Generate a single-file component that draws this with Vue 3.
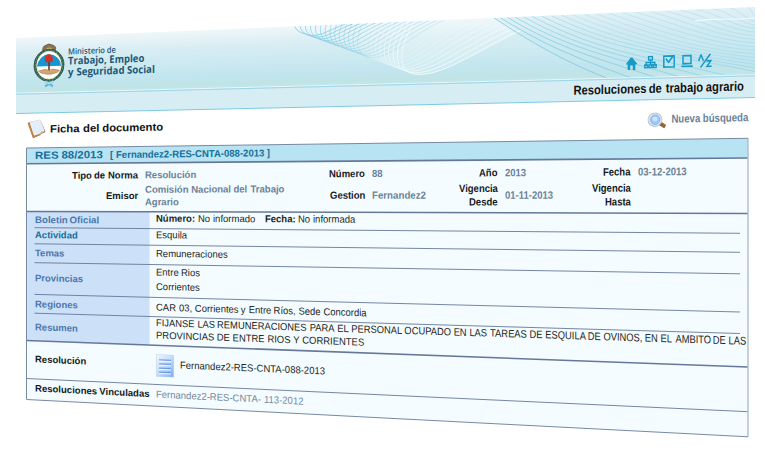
<script setup>
import { h, ref, onMounted } from 'vue'

// The page is laid out flat, then every word and icon is moved onto a slanted
// sheet whose height grows from left to right.
const LEFT = 26
const SPAN = 722
const lift = (v) => -10 + (v - 148) * 0.1877
const mapY = (x, v) => v + ((x - LEFT) / SPAN) * lift(v)

// A run of text, split in words; `fit` is the drawn width of the run.
const T = (props) =>
  h('span', { class: 'run', 'data-fit': props.fit, 'data-side': props.side },
    props.t.split(' ').flatMap((w, i) => [i ? ' ' : '', h('span', { class: 'w' }, w)]))
T.props = ['t', 'fit', 'side']

const page = ref(null)
onMounted(() => {
  const jobs = []
  page.value.querySelectorAll('.w').forEach((el) => {
    const r = el.getBoundingClientRect()
    const run = el.closest('.run')
    let k = 1
    let x = r.left
    if (run && run.dataset.fit) {
      const rr = run.getBoundingClientRect()
      k = Number(run.dataset.fit) / rr.width
      x = run.dataset.side === 'right'
        ? rr.right - (rr.right - r.left) * k
        : rr.left + (r.left - rr.left) * k
    }
    const mid = r.top + r.height / 2
    const s = 1 + ((x + (r.width * k) / 2 - LEFT) / SPAN) * 0.1877
    const slope = lift(mid) / SPAN
    const dy = mapY(x, mid) - mid - (s - 1) * (r.height / 2)
    jobs.push([el, `matrix(${k},${slope * k},0,${s},${x - r.left},${dy})`])
  })
  jobs.forEach(([el, m]) => { el.style.transform = m })
})

// Sheet art
const topY = (x) => 38 - ((x - 16) / 739) * 31
const midY = (x) => 94 - ((x - 16) / 739) * 18.5
const stops = [[0, 238, 246, 249], [0.28, 216, 237, 243], [0.5, 206, 234, 241], [0.76, 194, 229, 239], [0.9, 192, 228, 230], [1, 194, 230, 234]]
const shade = (p) => {
  let i = 0
  while (i < stops.length - 2 && p > stops[i + 1][0]) i++
  const [a, b] = [stops[i], stops[i + 1]]
  const f = (p - a[0]) / (b[0] - a[0])
  return `rgb(${[1, 2, 3].map((c) => Math.round(a[c] + (b[c] - a[c]) * f)).join(',')})`
}
const bands = Array.from({ length: 40 }, (_, i) => {
  const p = i / 40
  const yl = 38 + 56 * p
  const yr = 7 + 68.5 * p
  return { pts: `16,${yl} 755,${yr} 755,75.5 16,94`, fill: shade(p) }
})
const swirl = Array.from({ length: 24 }, (_, i) => {
  const f = i / 23
  const sx = 295 + 119 * f
  const sy = topY(sx)
  const ax = 305 + 99 * f
  const ay = 34 + 34.5 * f
  const bx = ax + 7 + 8 * f
  const by = ay + 1.5 + 4.5 * f
  const ex = 345 + 176 * f
  const ey = topY(ex) + Math.max(0, f - 0.7) * 45
  return {
    d: `M${sx},${sy} C${sx + 1 - 10 * f},${sy + 4 + 14 * f} ${ax - 6},${ay - 2 - 14 * f} ${ax},${ay}` +
      ` Q${ax + 3 + 3 * f},${by} ${bx},${by} C${bx + 10 + 18 * f},${by} ${ex - 16 - 28 * f},${ey + 6 + 13 * f} ${ex},${ey}`,
    stroke: f < 0.6 ? '#7cc9e2' : '#f8fdfe',
    o: f < 0.6 ? 0.85 - f * 0.95 : 0.1 + (f - 0.6) * 2
  }
})
const fan = Array.from({ length: 22 }, (_, i) => {
  const sx = 494 + i * 6.2 + i * i * 0.28
  const sy = topY(sx)
  const low = i < 6
  const ex = low ? 609 + i * 24 : 757
  const ey = low ? midY(ex) : 72 - (i - 6) * 3.6
  const s0 = 0.66 - i * 0.026
  const s1 = Math.max(0.06, 0.4 - i * 0.03)
  const reach = (ex - sx) * 0.36
  return { d: `M${sx},${sy} C${sx + reach},${sy + reach * s0} ${ex - reach},${ey - reach * s1} ${ex},${ey}`, o: Math.max(0.25, 0.8 - i * 0.06) }
})
const rules = [
  [26.5, 163.7, 748, 158, 1.6], [26.5, 211.4, 748, 213.6, 1.5],
  [34.5, 227.7, 740, 233.3, 0.9], [34.5, 243.8, 740, 252.3, 0.9],
  [34.5, 262.7, 740, 273.8, 0.9], [34.5, 294.4, 740, 312, 0.9],
  [34.5, 313.2, 740, 333.5, 0.9], [26.5, 340.5, 748, 367, 1.6],
  [26.5, 378.5, 748, 411.7, 0.9]
]
</script>

<template>
  <div class="page" ref="page">
    <svg class="sheet" width="765" height="457" viewBox="0 0 765 457">
      <defs>
        <clipPath id="banner"><polygon points="16,38 755,7 755,75.5 16,94" /></clipPath>
      </defs>
      <polygon v-for="(b, i) in bands" :key="i" :points="b.pts" :fill="b.fill" />
      <g clip-path="url(#banner)" fill="none">
        <path d="M494,18 C530,42 570,62 609,79 L755,80 L755,5Z" fill="#bfe6f0" opacity=".3" />
        <path d="M294,26 C306,38 400,66 418,74 C440,76 480,52 521,31 L494,18Z" fill="#f2fafc" opacity=".28" />
        <path v-for="(s, i) in swirl" :key="'s' + i" :d="s.d" :stroke="s.stroke" :stroke-opacity="s.o" stroke-width=".9" />
        <path v-for="(s, i) in fan" :key="'f' + i" :d="s.d" stroke="#7cc9e2" :stroke-opacity="s.o" stroke-width="1" />
        <path d="M695,21 C715,18 735,20 756,18" stroke="#f4fbfd" stroke-width="1" />
      </g>
      <polygon points="16,94 755,75.5 755,97.5 16,113.5" fill="#d7edf4" />
      <path d="M16,93.2 L755,74.7" stroke="#e9f7fb" stroke-width="1" />
      <path d="M16,94.3 L755,75.8" stroke="#9bd5e9" stroke-width="1" />
      <path d="M16,113.5 L755,97.5" stroke="#7ccbe4" stroke-width="1" />
      <polygon points="26.5,148 748,138.3 748,436.8 26.5,399.5" fill="#f4fcff" />
      <polygon points="26.5,148 748,138.3 748,158 26.5,163.7" fill="#b8e3f2" />
      <polygon points="27,211.4 149.5,211.8 149.5,344.9 27,340.5" fill="#cce0f8" />
      <path v-for="(r, i) in rules" :key="'r' + i" :d="`M${r[0]},${r[1]} L${r[2]},${r[3]}`" stroke="#65789a" :stroke-width="r[4]" />
      <path d="M748,138.3 L748,436.8" stroke="#aebdd0" stroke-width="1.4" />
      <path d="M26.5,148 L748,138.3 M26.5,399.5 L748,436.8 M26.5,148 L26.5,399.5" stroke="#7889a5" stroke-width="1" fill="none" />
    </svg>

    <header class="banner">
      <div class="brand">
        <svg class="w crest" width="32" height="44" viewBox="0 0 32 44">
          <path d="M10 8 Q9 3 13 2 L16 1 L19 2 Q24 3 22 8Z" fill="#8d7452" stroke="#5e503a" stroke-width=".8" />
          <path d="M12 7 Q16 2 20 7" fill="#dfba67" />
          <ellipse cx="16" cy="22" rx="15" ry="16" fill="#2b6150" stroke="#385044" stroke-width=".8" />
          <ellipse cx="16" cy="22" rx="13.8" ry="15" fill="none" stroke="#5c9272" stroke-width="1" stroke-dasharray="1.5 1.5" />
          <ellipse cx="16" cy="22" rx="12.3" ry="13.8" fill="#fff" stroke="#f2e4bc" stroke-width=".8" />
          <path d="M3.9 23 A12.2 13.7 0 0 1 28.1 23Z" fill="#1598d1" />
          <path d="M16 17 V30" stroke="#68382a" stroke-width="1.6" />
          <path d="M12 18 Q11 12 15 11 Q20 11 20 17 L19 19 L13 19Z" fill="#d62f25" />
          <path d="M5.5 27.5 L12 26 L16 27 L20 26 L26.5 27.5 L24 29.5 L18 31 L14 31 L8 29.5Z" fill="#d5a56e" stroke="#94704b" stroke-width=".5" />
          <path d="M12 38 L20 43 M20 38 L12 43" stroke="#66b9e0" stroke-width="2.2" />
          <path d="M12 38 Q16 42 20 38" fill="none" stroke="#c7e9f6" stroke-width="1.2" />
        </svg>
        <div class="brand-text">
          <T class="small" t="Ministerio de" fit="48" />
          <T t="Trabajo, Empleo" fit="76" />
          <T t="y Seguridad Social" fit="86.5" />
        </div>
      </div>
      <nav class="tools">
        <svg class="w home" width="11" height="11" viewBox="0 0 12 11" preserveAspectRatio="none"><path d="M0 5.5 L4.6 .8 V0 H7.4 V.8 L12 5.5 V6 H10.2 V11 H7.4 V7 H4.6 V11 H1.8 V6 H0Z" fill="#169bc9" /></svg>
        <svg class="w" width="13" height="11" viewBox="0 0 13 11" fill="none" stroke="#169bc9" stroke-width="1.4"><path d="M4.6 .7h3.8v3H4.6z M6.5 3.7V8 M2.2 8V5.8h8.6V8 M.8 8h2.8v2.3H.8z M5.1 8h2.8v2.3H5.1z M9.4 8h2.8v2.3H9.4z" /></svg>
        <svg class="w" width="12" height="11" viewBox="0 0 12 11" fill="none" stroke="#169bc9" stroke-width="1.5"><path d="M.8 .8h10.4v9.4H.8z M2.8 3 L5.6 6 L10 1" /></svg>
        <svg class="w" width="12" height="11" viewBox="0 0 12 11" fill="none" stroke="#169bc9" stroke-width="1.5"><path d="M2 .8h8v7H2z M.3 10.2h11.4" /></svg>
        <svg class="w az" width="14" height="12" viewBox="0 0 14 12" fill="none" stroke="#169bc9" stroke-width="1.4"><path d="M.5 6 L3 .8 L5.5 6 M2.5 11.5 L12.5 0 M8.6 6h4.3l-4 4.8h4.7" /></svg>
      </nav>
    </header>
    <div class="section"><T t="Resoluciones de trabajo agrario" fit="171" side="right" /></div>

    <div class="heading">
      <svg class="w note" width="19" height="20" viewBox="0 0 19 20">
        <path d="M1.5 4 L13 1.5 L18 13 L6.5 18.5Z" fill="#c58a46" stroke="#885b2c" stroke-width=".8" />
        <path d="M3 3.6 L13 1.2 L17.2 12.2 L13 15 L7.2 16.4Z" fill="#e4eefb" stroke="#f8fbff" stroke-width=".7" />
        <path d="M1.4 4 L6.4 18.4 L13.5 15.5" fill="none" stroke="#c08345" stroke-width="1.6" />
        <path d="M12.5 15.6 L14 12.5 L17 12.3Z" fill="#aec4df" />
      </svg>
      <T class="title" t="Ficha del documento" fit="113" />
      <svg class="w search" width="20" height="14" viewBox="0 0 20 14">
        <path d="M13 9.3 L18.2 12.5" stroke="#9a6533" stroke-width="3.4" />
        <path d="M12.5 9.2 L14.3 10.4" stroke="#56544f" stroke-width="3" />
        <ellipse cx="8" cy="6.3" rx="7" ry="5.8" fill="#dce6ef" stroke="#b9c2cd" stroke-width=".9" />
        <ellipse cx="8.2" cy="6.3" rx="4.6" ry="4.1" fill="#9fc9fa" stroke="#7faeea" stroke-width=".8" />
        <ellipse cx="8" cy="5.6" rx="2.6" ry="2" fill="#cde5ff" />
      </svg>
      <T class="link" t="Nueva búsqueda" fit="77" side="right" />
    </div>

    <main class="card">
      <div class="name">
        <T class="res" t="RES 88/2013" fit="68" />
        <T t="[ Fernandez2-RES-CNTA-088-2013 ]" fit="160" />
      </div>
      <div class="facts">
        <b><T t="Tipo de Norma" /></b><i><T t="Resolución" /></i>
        <b><T t="Número" /></b><i><T t="88" /></i>
        <b><T t="Año" /></b><i><T t="2013" /></i>
        <b><T t="Fecha" /></b><i><T t="03-12-2013" /></i>
        <b><T t="Emisor" /></b><i><T t="Comisión Nacional del Trabajo" fit="139" /><br /><T t="Agrario" /></i>
        <b><T t="Gestion" /></b><i><T t="Fernandez2" fit="54" /></i>
        <b><T t="Vigencia" /><br /><T t="Desde" /></b><i><T t="01-11-2013" /></i>
        <b><T t="Vigencia" /><br /><T t="Hasta" /></b><i></i>
      </div>
      <div class="row r1"><b><T t="Boletin Oficial" fit="65" /></b>
        <p><strong><T t="Número:" /></strong>&nbsp;<T t="No informado" /><span class="gap"></span><strong><T t="Fecha:" /></strong>&nbsp;<T t="No informada" /></p></div>
      <div class="row r2"><b class="teal"><T t="Actividad" /></b><p><T t="Esquila" /></p></div>
      <div class="row r3"><b><T t="Temas" /></b><p><T t="Remuneraciones" /></p></div>
      <div class="row r4"><b><T t="Provincias" /></b><p><T t="Entre Rios" /><br /><T t="Corrientes" /></p></div>
      <div class="row r5"><b><T t="Regiones" /></b><p><T t="CAR 03, Corrientes y Entre Ríos, Sede Concordia" fit="210" /></p></div>
      <div class="row r6"><b><T t="Resumen" /></b>
        <p><T t="FIJANSE LAS REMUNERACIONES PARA EL PERSONAL OCUPADO EN LAS TAREAS DE ESQUILA DE OVINOS, EN EL AMBITO DE LAS" fit="590.5" /><br /><T t="PROVINCIAS DE ENTRE RIOS Y CORRIENTES" fit="208" /></p></div>
      <div class="row r7"><b class="dark"><T t="Resolución" /></b>
        <p class="file">
          <svg class="w" width="18" height="22" viewBox="0 0 18 22">
            <defs><linearGradient id="doc" x1="0" y1="0" x2="1" y2="1"><stop offset="0" stop-color="#f1f7ff" /><stop offset=".5" stop-color="#c5dcf9" /><stop offset="1" stop-color="#78aaf0" /></linearGradient></defs>
            <rect x=".3" y=".3" width="17.4" height="21.4" fill="url(#doc)" stroke="#b7cce6" stroke-width=".5" />
            <path d="M3 5.5h12 M3 9.5h12 M3 13.5h12 M3 17.5h12" stroke="#709ee6" stroke-width="1.2" />
            <path d="M3 6.8h12 M3 10.8h12 M3 14.8h12 M3 18.8h12" stroke="#f2f8ff" stroke-width=".9" />
          </svg>
          <T t="Fernandez2-RES-CNTA-088-2013" fit="145" />
        </p></div>
      <div class="row r8"><b class="dark"><T t="Resoluciones Vinculadas" fit="115" /></b><p class="grey"><T t="Fernandez2-RES-CNTA- 113-2012" fit="147" /></p></div>
    </main>
  </div>
</template>

<style>
body { margin: 0; background: #fff; }
.run { display: inline-block; white-space: nowrap; }
.w { display: inline-block; transform-origin: 0 0; flex: none; }
</style>

<style scoped>
.page {
  position: relative;
  width: 765px;
  height: 457px;
  overflow: hidden;
  box-sizing: border-box;
  padding-top: 38px;
  font: 9.5px/12px "Liberation Sans", Arial, sans-serif;
  text-rendering: geometricPrecision;
  color: #1c1f22;
}
.sheet { position: absolute; left: 0; top: 0; z-index: -1; }
.banner { display: flex; justify-content: space-between; height: 56px; padding: 0 53px 0 33px; }
.brand { display: flex; gap: 3px; padding-top: 6px; }
.brand-text {
  display: flex; flex-direction: column; align-items: flex-start; padding-top: 5px;
  font: 700 10.3px/10.8px "Open Sans", "Noto Sans", sans-serif; color: #215876;
}
.small { font-size: 8.2px; font-weight: 600; line-height: 9px; }
.tools { display: flex; align-items: center; gap: 6.3px; padding-top: 31px; }
.az { margin-left: -1.5px; }
.home { margin-top: 1px; margin-right: .5px; }
.section { display: flex; justify-content: flex-end; align-items: center; height: 20px; padding: 2px 21px 0 0; box-sizing: border-box; font-size: 11.2px; font-weight: 700; color: #111; }
.heading { display: flex; align-items: center; height: 34px; padding: 0 17px 3px 27px; box-sizing: border-box; }
.note { margin-top: -2px; }
.title { margin-left: 4px; font-size: 10.6px; font-weight: 700; color: #111; }
.search { margin-left: auto; margin-right: 3px; margin-top: 4px; }
.link { font-size: 9.8px; font-weight: 700; color: #6b8298; margin-top: 4px; }
.card { display: flex; flex-direction: column; margin: 0 17px 0 26.5px; }
.name { display: flex; align-items: center; height: 15.7px; box-sizing: border-box; padding: 1.5px 0 0 8.5px; font-weight: 700; color: #146f9c; }
.res { font-size: 10.4px; width: 76px; }
.name .res { width: auto; margin-right: 13.5px; }
.facts {
  display: grid; height: 47.6px; box-sizing: border-box; padding-top: 7.5px;
  grid-template-columns: 111.5px 156.5px 70.5px 72px 60.5px 72.5px 60.5px 110px;
  grid-template-rows: 12px 28px; align-items: center;
}
.facts b { text-align: right; color: #15191d; }
.facts i { padding-left: 7.2px; font-style: normal; font-weight: 700; color: #6b8298; }
.row { display: grid; grid-template-columns: 121.6px 1fr; align-items: center; padding-left: 8px; }
.row b { color: #4b77ad; padding-top: 1.5px; }
.row .teal { color: #146f9c; }
.row .dark { color: #15191d; padding-top: 0; }
.row p { margin: 0; white-space: nowrap; }
.gap { display: inline-block; width: 10px; }
.r1 { height: 16.4px; }
.r1 b { padding-top: 3px; }
.r2 { height: 16px; }
.r2 p { padding-bottom: 1.6px; }
.r3 { height: 19px; }
.r3 p { padding-bottom: 1px; }
.r4 { height: 31.6px; }
.r4 p { line-height: 13.7px; padding-bottom: 1.6px; }
.r5 { height: 18.7px; }
.r5 b { padding-top: 2.5px; }
.r5 p { padding-top: 2.4px; }
.r6 { height: 27.3px; }
.r6 b { padding-top: 2.5px; }
.r6 p { padding-bottom: .4px; }
.r7 { height: 38px; }
.r7 .dark { padding-top: 1px; }
.r7 .file { display: flex; align-items: center; gap: 6px; padding-top: 1px; }
.r8 { height: 21.2px; }
.r8 b, .r8 p { padding-bottom: 0; }
.grey { color: #75889c; }
</style>
